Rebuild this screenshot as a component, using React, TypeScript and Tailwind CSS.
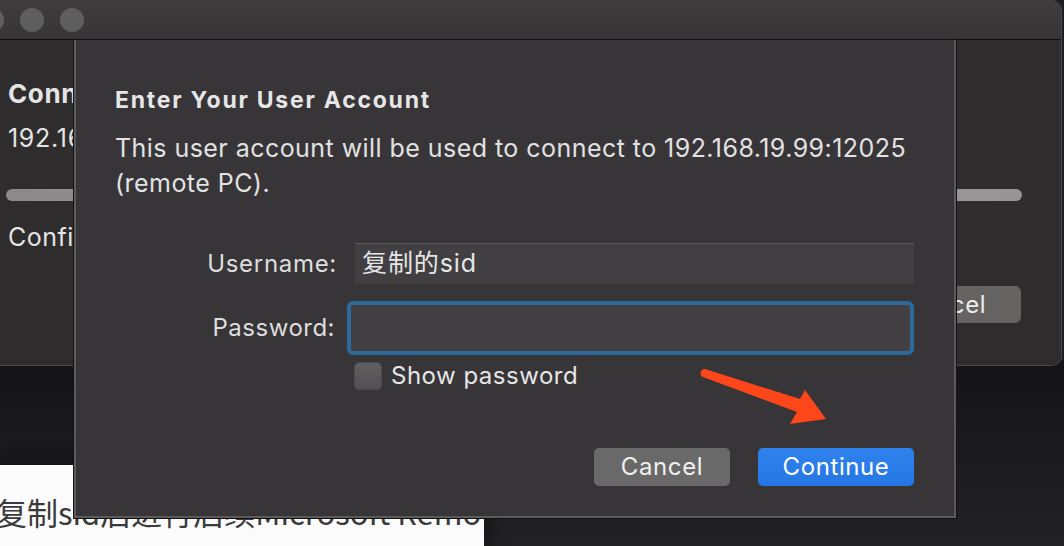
import React from "react";

export default function App() {
  return (
    <div className="relative w-[1064px] h-[546px] overflow-hidden bg-[#1e1e20] font-['Inter','Noto_Sans_CJK_SC',sans-serif]">
      {/* backdrop gradient under window */}
      <div className="absolute left-0 top-[360px] w-[1064px] h-[186px] bg-gradient-to-b from-[#141416] to-[#222224]" />

      {/* document page behind */}
      <div className="absolute left-0 top-[465px] w-[484px] h-[90px] bg-[#fbfbfb] overflow-hidden shadow-[0_0_18px_6px_rgba(0,0,0,0.35)]">
        <div className="ml-[-4px] mt-[27px] whitespace-nowrap text-[31px] leading-[40px] text-[#3a3a3a] font-['Noto_Sans_CJK_SC',sans-serif]">
          复制sid后进行后续Microsoft Remote Desktop连接
        </div>
      </div>

      {/* main window behind */}
      <div className="absolute left-0 top-0 w-[1062px] h-[366px] rounded-tr-[10px] rounded-br-[10px] overflow-hidden flex flex-col border-b border-r border-[#4a4849]">
        <div className="h-[40px] shrink-0 bg-gradient-to-b from-[#3f3d3e] to-[#363435] border-b border-[#0e0e0e] flex items-center gap-[16px] ml-[-20px]">
          <span className="w-[24px] h-[24px] rounded-full bg-[#5f5e5f]" />
          <span className="w-[24px] h-[24px] rounded-full bg-[#5f5e5f]" />
          <span className="w-[24px] h-[24px] rounded-full bg-[#5f5e5f]" />
        </div>
        <div className="flex-1 bg-[#2e2c2c] pl-[8px] pr-[40px] pt-[38px] flex flex-col text-[#e4e4e4]">
          <div className="text-[26px] leading-[32px] font-bold tracking-[0.6px] whitespace-nowrap">Connecting to remote PC</div>
          <div className="mt-[12px] text-[25px] leading-[32px] tracking-[0.7px] whitespace-nowrap">192.168.19.99:12025</div>
          <div className="mt-[35px] ml-[-2px] h-[12px] w-[1016px] rounded-full bg-gradient-to-r from-[#8a8a8a] via-[#a0a0a0] to-[#959595]" />
          <div className="mt-[20px] text-[25px] leading-[32px] tracking-[0.5px] whitespace-nowrap">Configuring remote session...</div>
          <div className="mt-[33px] flex justify-end">
            <div className="w-[152px] h-[37px] rounded-[6px] bg-[#646362] flex items-center justify-center text-[24px] tracking-[0.6px] text-[#ececec]">
              Cancel
            </div>
          </div>
        </div>
      </div>

      {/* sheet dialog */}
      <div className="absolute left-[74px] top-[40px] w-[882px] h-[478px] bg-[#373538] border-2 border-t-0 border-[#5c5b5c] shadow-[0_0_0_1px_#121212] flex flex-col pl-[39px] pr-[40px] pt-[46px] text-[#e2e2e2]">
        <div className="text-[23px] leading-[28px] font-bold tracking-[1.75px] text-[#e6e6e6] whitespace-nowrap">Enter Your User Account</div>
        <div className="mt-[17px] text-[25px] leading-[35px] tracking-[0.45px] text-[#e2e2e2] whitespace-nowrap">
          This user account will be used to connect to 192.168.19.99:12025
          <br />
          (remote PC).
        </div>

        <div className="mt-[42px] flex items-center">
          <div className="w-[222px] text-right text-[24px] tracking-[0.7px] text-[#dedede]">Username:</div>
          <div className="ml-[18px] w-[559px] h-[41px] bg-[#413f42] border-t border-[#5a585b] flex items-center pl-[7px] text-[25px] tracking-[0.9px] text-[#e6e6e6]">
            复制的sid
          </div>
        </div>

        <div className="mt-[17px] flex items-center">
          <div className="w-[222px] text-right text-[24px] tracking-[0.5px] text-[#dedede]">Password:</div>
          <div className="ml-[12px] w-[572px] h-[54px] rounded-[6px] border-[4px] border-[#2c6a9b] bg-[#413f42]" />
        </div>

        <div className="mt-[7px] h-[28px] flex items-center">
          <div className="ml-[239px] w-[28px] h-[28px] rounded-[5px] bg-gradient-to-b from-[#605e61] to-[#525053] border border-[#49474a]" />
          <div className="ml-[9px] text-[24px] leading-[28px] tracking-[0.5px] text-[#e6e6e6]">Show password</div>
        </div>

        <div className="mt-[58px] flex justify-end gap-[28px]">
          <div className="w-[136px] h-[38px] rounded-[5px] bg-[#6a696a] flex items-center justify-center text-[24px] tracking-[0.6px] text-[#f0f0f0]">
            Cancel
          </div>
          <div className="w-[156px] h-[38px] rounded-[5px] bg-gradient-to-b from-[#2f82ee] to-[#2677e4] flex items-center justify-center text-[24px] tracking-[0.6px] text-white">
            Continue
          </div>
        </div>
      </div>

      {/* red annotation arrow */}
      <svg className="absolute left-0 top-0" width="1064" height="546" viewBox="0 0 1064 546">
        <path
          d="M705 369 L800 399 L805 390 L826 419 L790 424 L797 412 L703 377 A4.2 4.2 0 0 1 705 369 Z"
          fill="#fd4619"
        />
      </svg>
    </div>
  );
}
